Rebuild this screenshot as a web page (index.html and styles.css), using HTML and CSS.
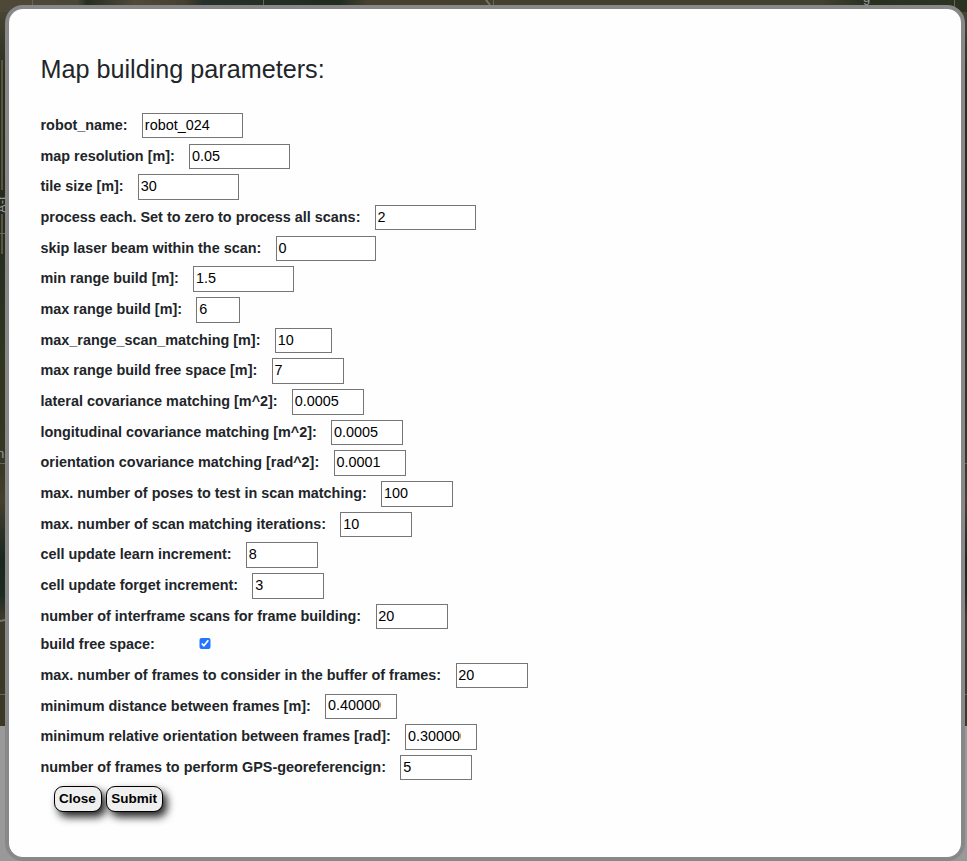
FILE: index.html
```html
<!DOCTYPE html>
<html lang="en">
<head>
<meta charset="utf-8">
<title>Map building parameters</title>
<link rel="stylesheet" href="styles.css">
</head>
<body>
<svg class="map" width="967" height="726" aria-hidden="true">
  <defs>
    <linearGradient id="top"><stop offset="0" stop-color="#4d4838"/><stop offset=".08" stop-color="#4a4637"/><stop offset=".09" stop-color="#252e22"/><stop offset=".14" stop-color="#50493a"/><stop offset=".19" stop-color="#45402f"/><stop offset=".21" stop-color="#27302a"/><stop offset=".35" stop-color="#202c20"/><stop offset=".38" stop-color="#454030"/><stop offset=".85" stop-color="#424030"/><stop offset=".9" stop-color="#28301f"/><stop offset="1" stop-color="#2b3323"/></linearGradient>
    <linearGradient id="side" x2="0" y2="1"><stop offset="0" stop-color="#4d4838"/><stop offset=".1" stop-color="#28301f"/><stop offset=".3" stop-color="#222b1f"/><stop offset=".5" stop-color="#30351f"/><stop offset=".62" stop-color="#333623"/><stop offset=".69" stop-color="#443e2d"/><stop offset=".77" stop-color="#192720"/><stop offset=".82" stop-color="#1d2b22"/><stop offset=".85" stop-color="#3c392a"/><stop offset="1" stop-color="#3b3827"/></linearGradient>
  </defs>
  <rect width="967" height="726" fill="url(#side)"/>
  <rect width="967" height="12" fill="url(#top)"/>
  <path d="M2 60v130M2 214v40" stroke="#5c543f" stroke-width="2"/>
  <path d="M32.500 0v8M263.500 0v8M493.500 0v8M954.500 0v14M0 233.500h5M0 463.500h5M0 694.500h5M962 463.500h5M962 694.500h5" stroke="#666658"/>
  <path d="M0 621l5-1M486 0l4 5" stroke="#777568" stroke-width="2"/>
  <text class="place" x="863" y="2">g</text>
  <text class="place" x="-3" y="458">n</text>
  <text class="place" transform="translate(6 213) rotate(-90)">A-t</text>
</svg>
<main class="dialog">
  <h1>Map building parameters:</h1>
  <form>
    <div class="row"><label for="f1">robot_name:</label><input id="f1" class="w7" type="text" value="robot_024"></div>
    <div class="row"><label for="f2">map resolution [m]:</label><input id="f2" class="w7" type="number" step="any" value="0.05"></div>
    <div class="row"><label for="f3">tile size [m]:</label><input id="f3" class="w7" type="number" value="30"></div>
    <div class="row"><label for="f4">process each. Set to zero to process all scans:</label><input id="f4" class="w7" type="number" value="2"></div>
    <div class="row"><label for="f5">skip laser beam within the scan:</label><input id="f5" class="w7" type="number" value="0"></div>
    <div class="row"><label for="f6">min range build [m]:</label><input id="f6" class="w7" type="number" step="any" value="1.5"></div>
    <div class="row"><label for="f7">max range build [m]:</label><input id="f7" class="w3" type="number" value="6"></div>
    <div class="row"><label for="f8">max_range_scan_matching [m]:</label><input id="f8" class="w4" type="number" value="10"></div>
    <div class="row"><label for="f9">max range build free space [m]:</label><input id="f9" class="w5" type="number" value="7"></div>
    <div class="row"><label for="f10">lateral covariance matching [m^2]:</label><input id="f10" class="w5" type="number" step="any" value="0.0005"></div>
    <div class="row"><label for="f11">longitudinal covariance matching [m^2]:</label><input id="f11" class="w5" type="number" step="any" value="0.0005"></div>
    <div class="row"><label for="f12">orientation covariance matching [rad^2]:</label><input id="f12" class="w5" type="number" step="any" value="0.0001"></div>
    <div class="row"><label for="f13">max. number of poses to test in scan matching:</label><input id="f13" class="w5" type="number" value="100"></div>
    <div class="row"><label for="f14">max. number of scan matching iterations:</label><input id="f14" class="w5" type="number" value="10"></div>
    <div class="row"><label for="f15">cell update learn increment:</label><input id="f15" class="w5" type="number" value="8"></div>
    <div class="row"><label for="f16">cell update forget increment:</label><input id="f16" class="w5" type="number" value="3"></div>
    <div class="row"><label for="f17">number of interframe scans for frame building:</label><input id="f17" class="w5" type="number" value="20"></div>
    <div class="row check"><label for="f18">build free space:</label><input id="f18" type="checkbox" checked></div>
    <div class="row"><label for="f19">max. number of frames to consider in the buffer of frames:</label><input id="f19" class="w5" type="number" value="20"></div>
    <div class="row"><label for="f20">minimum distance between frames [m]:</label><input id="f20" class="w5" type="number" step="any" value="0.400000"></div>
    <div class="row"><label for="f21">minimum relative orientation between frames [rad]:</label><input id="f21" class="w5" type="number" step="any" value="0.300000"></div>
    <div class="row"><label for="f22">number of frames to perform GPS-georeferencign:</label><input id="f22" class="w5" type="number" value="5"></div>
    <div class="actions"><button type="button">Close</button><button type="button">Submit</button></div>
  </form>
</main>
</body>
</html>
```
FILE: styles.css
```css
* { box-sizing: border-box; }
body {
  margin: 0;
  height: 861px;
  overflow: hidden;
  padding: 5px 2px 0 5px;
  background: #999;
  color: #212529;
  font: 14.4px/21.6px "Liberation Sans", Arial, sans-serif;
}
.map { position: absolute; left: 0; top: 0; }
.place { font-size: 13px; fill: #999; }
.dialog {
  position: relative;
  height: 856px;
  padding: 45px 31.5px 0;
  border: 4px solid #888;
  border-radius: 18px;
  background: #fefefe;
}
h1 {
  margin: 0 0 28.85px;
  font-size: 25.2px;
  line-height: 30.24px;
  font-weight: 400;
}
.row {
  display: flex;
  align-items: flex-start;
  height: 30.68px;
}
label {
  margin: 2px 14.4px 0 0;
  font-weight: 700;
  white-space: nowrap;
}
input {
  margin: 0;
  height: 25.4px;
  padding: 0 0.500px 1.800px 1.8px;
  border: 1px solid #767676;
  background: #fff;
  color: #000;
  font: inherit;
}
.w7 { width: 100.8px; }
.w3 { width: 43.2px; }
.w4 { width: 57.6px; }
.w5 { width: 72px; }
.row.check { height: 28.4px; }
.check label { margin-top: -0.300px; }
.check input { width: 11.700px; height: 11.700px; margin: 3.200px 0 0 30px; accent-color: #2374ff; }
.actions { display: flex; gap: 4px; padding: 0 0 0 13px; }
button {
  height: 26px;
  padding: 0 5.100px 0 4.500px;
  border: 1px solid #000;
  border-radius: 9px;
  background: #efefef;
  box-shadow: 4px 5px 8px #222;
  color: #000;
  font: 700 13.5px/20px "Liberation Sans", Arial, sans-serif;
}
```
